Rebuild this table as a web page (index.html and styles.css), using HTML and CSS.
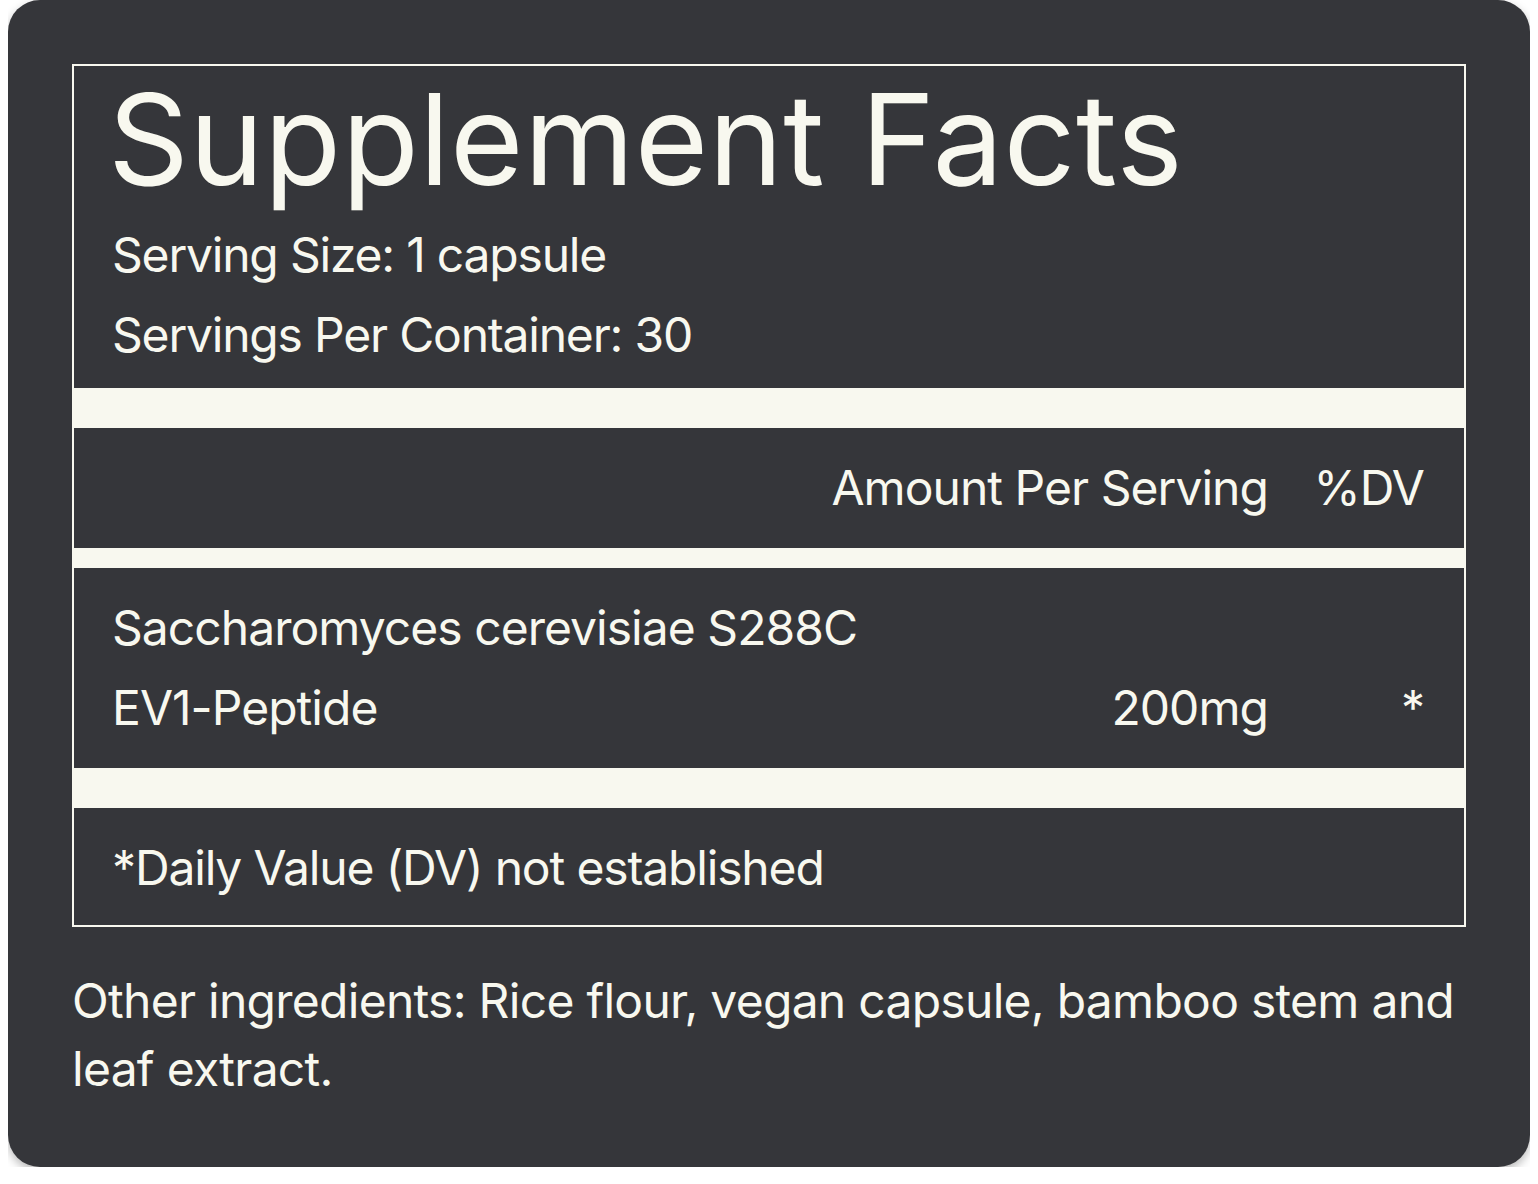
FILE: index.html
```html
<!DOCTYPE html>
<html lang="en">
<head>
<meta charset="utf-8">
<title>Supplement Facts</title>
<link rel="stylesheet" href="styles.css">
</head>
<body>
<div class="card">
  <div class="facts">
    <div class="top">
      <h1 class="title">Supplement Facts</h1>
      <p class="line">Serving Size: 1 capsule</p>
      <p class="line">Servings Per Container: 30</p>
    </div>
    <div class="bar bar-thick"></div>
    <div class="row head">
      <span class="col-name"></span>
      <span class="col-amt">Amount Per Serving</span>
      <span class="col-dv">%DV</span>
    </div>
    <div class="bar bar-thin"></div>
    <div class="ingredients">
      <div class="row">
        <span class="col-name">Saccharomyces cerevisiae S288C</span>
        <span class="col-amt"></span>
        <span class="col-dv"></span>
      </div>
      <div class="row">
        <span class="col-name">EV1-Peptide</span>
        <span class="col-amt">200mg</span>
        <span class="col-dv">*</span>
      </div>
    </div>
    <div class="bar bar-thick"></div>
    <div class="foot">*Daily Value (DV) not established</div>
  </div>
  <p class="other">Other ingredients: Rice flour, vegan capsule, bamboo stem and leaf extract.</p>
</div>
</body>
</html>
```

FILE: styles.css
```css
html, body {
  margin: 0;
  padding: 0;
  background: #ffffff;
}
body {
  margin: 0 8px;
  font-family: "Inter", "Liberation Sans", sans-serif;
  color: #f8f8ef;
}
.card {
  background: #35363a;
  border-radius: 32px;
  padding: 64px;
  box-shadow: 0 4px 10px rgba(0, 0, 0, 0.28);
}
.facts {
  border: 2px solid #f8f8ef;
}
.top {
  padding: 4px 40px 13px 38px;
}
.title {
  margin: 0 0 7px -4px;
  font-size: 126px;
  font-weight: 400;
  line-height: 138px;
  letter-spacing: 0.003em;
}
.line {
  margin: 0;
  font-size: 48px;
  line-height: 80px;
  letter-spacing: -0.025em;
}
.bar {
  background: #f8f8ef;
}
.bar-thick { height: 40px; }
.bar-thin { height: 20px; }
.row {
  display: grid;
  grid-template-columns: 1fr auto 156px;
  font-size: 48px;
  line-height: 80px;
  letter-spacing: -0.02em;
}
.head {
  padding: 20px 40px 20px 38px;
}
.ingredients {
  padding: 20px 40px 20px 38px;
}
.col-amt { text-align: right; }
.col-dv { text-align: right; }
.foot {
  padding: 20px 40px 17px 38px;
  font-size: 48px;
  line-height: 80px;
  letter-spacing: -0.024em;
}
.other {
  margin: 40px 0 0;
  font-size: 48px;
  line-height: 68px;
  letter-spacing: -0.015em;
}
```
